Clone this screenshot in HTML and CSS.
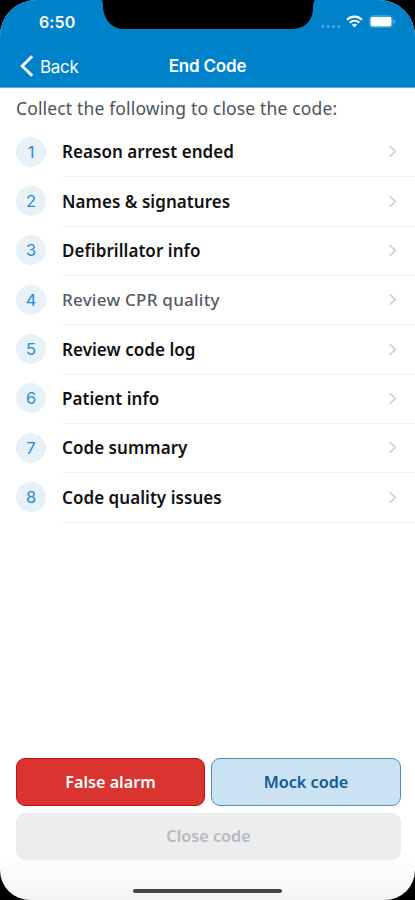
FILE: index.html
```html
<!DOCTYPE html>
<html lang="en">
<head>
<meta charset="utf-8">
<title>End Code</title>
<link rel="stylesheet" href="styles.css">
</head>
<body>
<div class="phone">
  <header class="header">
    <svg class="notch" width="214" height="29" viewBox="0 0 214 29" aria-hidden="true"><path d="M0 0C1 2 1 5 1 9C3 21 10 29 22 29H189C202 29 210 22 211 10C211 5 211 2 213 0Z" fill="#000"/></svg>
    <div class="status">
      <span class="time">6:50</span>
      <div class="indicators">
        <svg width="20" height="5" viewBox="0 0 20 5" fill="#63b1df"><circle cx="2" cy="2.5" r="1.3"/><circle cx="7.3" cy="2.5" r="1.3"/><circle cx="12.6" cy="2.5" r="1.3"/><circle cx="17.9" cy="2.5" r="1.3"/></svg>
        <svg class="wifi" width="17" height="13" viewBox="0 0 17 13" fill="none" stroke="#fff" stroke-width="2.2"><path d="M1 4.7C5.2.6 11.8.6 16 4.7M3.8 7.6C6.5 5.1 10.5 5.1 13.2 7.6"/><path d="M5.9 9.8C7.4 8.5 9.6 8.5 11.1 9.8L8.5 12.6Z" fill="#fff" stroke="none"/></svg>
        <svg class="battery" width="28" height="13" viewBox="0 0 28 13"><rect x=".5" y=".5" width="23" height="12" rx="3.2" fill="none" stroke="#3a9bd5"/><rect x="1.5" y="1.8" width="21" height="9.6" rx="2" fill="#fff"/><path d="M24.6 4.3C26.6 5 26.6 8 24.6 8.7Z" fill="#75bae3"/></svg>
      </div>
    </div>
    <nav class="nav">
      <a class="back"><svg width="14" height="22" viewBox="0 0 14 22" fill="none" stroke="#fff" stroke-width="2.8"><path d="M12.2 1.2L2.2 11L12.2 20.8"/></svg><span>Back</span></a>
      <h1>End Code</h1>
    </nav>
  </header>
  <main>
    <p class="intro">Collect the following to close the code:</p>
    <ol class="steps">
      <li><span class="num">1</span><div class="row"><span class="label">Reason arrest ended</span><svg class="chev" viewBox="0 0 9 14"><path d="M1.5 1.2L7.4 7L1.5 12.8"/></svg></div></li>
      <li><span class="num">2</span><div class="row"><span class="label">Names &amp; signatures</span><svg class="chev" viewBox="0 0 9 14"><path d="M1.5 1.2L7.4 7L1.5 12.8"/></svg></div></li>
      <li><span class="num">3</span><div class="row"><span class="label">Defibrillator info</span><svg class="chev" viewBox="0 0 9 14"><path d="M1.5 1.2L7.4 7L1.5 12.8"/></svg></div></li>
      <li><span class="num">4</span><div class="row"><span class="label muted">Review CPR quality</span><svg class="chev" viewBox="0 0 9 14"><path d="M1.5 1.2L7.4 7L1.5 12.8"/></svg></div></li>
      <li><span class="num">5</span><div class="row"><span class="label">Review code log</span><svg class="chev" viewBox="0 0 9 14"><path d="M1.5 1.2L7.4 7L1.5 12.8"/></svg></div></li>
      <li><span class="num">6</span><div class="row"><span class="label">Patient info</span><svg class="chev" viewBox="0 0 9 14"><path d="M1.5 1.2L7.4 7L1.5 12.8"/></svg></div></li>
      <li><span class="num">7</span><div class="row"><span class="label">Code summary</span><svg class="chev" viewBox="0 0 9 14"><path d="M1.5 1.2L7.4 7L1.5 12.8"/></svg></div></li>
      <li><span class="num">8</span><div class="row"><span class="label">Code quality issues</span><svg class="chev" viewBox="0 0 9 14"><path d="M1.5 1.2L7.4 7L1.5 12.8"/></svg></div></li>
    </ol>
  </main>
  <footer class="actions">
    <button class="btn danger">False alarm</button>
    <button class="btn mock">Mock code</button>
    <button class="btn close" disabled>Close code</button>
  </footer>
  <div class="home"></div>
</div>
</body>
</html>
```

FILE: styles.css
```css
* { box-sizing: border-box; }
body { margin: 0; background: #000; font-family: "Noto Sans", sans-serif; }
.phone {
  width: 415px; height: 900px; overflow: hidden;
  display: flex; flex-direction: column;
  border-radius: 36px 36px 30px 30px;
  background: linear-gradient(#fff 855px, #f5f5f5 900px);
}
.header { position: relative; height: 88px; flex: none; background: #0082ca; border-bottom: 1px solid #5cacdf; color: #fff; }
.notch { position: absolute; left: 102px; top: 0; }
.status { height: 44px; padding: 0 19px 0 39px; display: flex; justify-content: space-between; align-items: center; }
.time { font: 600 16px/20px Inter, sans-serif; letter-spacing: .1px; }
.indicators { display: flex; align-items: center; margin: -1px 4px 0 0; }
.indicators > svg:first-child { margin: 9px 5px 0 0; }
.wifi { margin-right: 6px; }
.battery { margin-right: -5px; }
.nav { height: 44px; display: grid; grid-template-columns: 1fr auto 1fr; align-items: center; padding: 0 20px; }
.back { display: flex; align-items: center; gap: 6px; font: 400 17px/22px Inter, sans-serif; letter-spacing: -.3px; }
.back span { padding-top: 2px; }
h1 { margin: 0; font: 600 17px/22px Inter, sans-serif; letter-spacing: -.2px; }
main { flex: 1; }
.intro { margin: 0; padding: 8px 16px 0; font-size: 17.5px; letter-spacing: .15px; line-height: 24px; height: 40px; color: #4c525b; white-space: nowrap; }
.steps { list-style: none; margin: 0; padding: 0; }
.steps li { height: 49.35px; display: flex; align-items: center; padding-left: 16px; }
.num { width: 30px; height: 30px; margin: 0 16px 2px 0; border-radius: 50%; background: #e6f1f8; color: #2d8bd0; font: 400 16.5px/30px Inter, sans-serif; text-align: center; }
.row { flex: 1; height: 100%; display: flex; justify-content: space-between; align-items: center; padding-right: 18px; border-bottom: 1px solid #efefef; }
.label { font-size: 17px; letter-spacing: .05px; line-height: 24px; font-weight: 600; color: #111; white-space: nowrap; }
.muted { font-weight: 500; letter-spacing: .25px; color: #555b64; }
.chev { width: 9px; height: 13px; margin-bottom: 1px; fill: none; stroke: #d2d2d2; stroke-width: 1.9; }
.actions { display: grid; grid-template-columns: 189px 190px; grid-template-rows: 48px 47px; gap: 7px 6px; padding-left: 16px; height: 131px; align-content: start; }
.btn { font: 600 16.2px/24px "Noto Sans", sans-serif; border: 1px solid; border-radius: 9px; padding: 0 0 1px; }
.danger { background: #d93430; border-color: #c90d10; color: #fff; }
.mock { background: #cae2f1; border-color: #4b8fc2; color: #12599b; }
.close { grid-column: 1 / 3; background: #ebedee; border-color: #ebedee; color: #b7babd; }
.home { flex: none; width: 149px; height: 4px; margin: 0 auto 7px; border-radius: 2px; background: #444; }
```
